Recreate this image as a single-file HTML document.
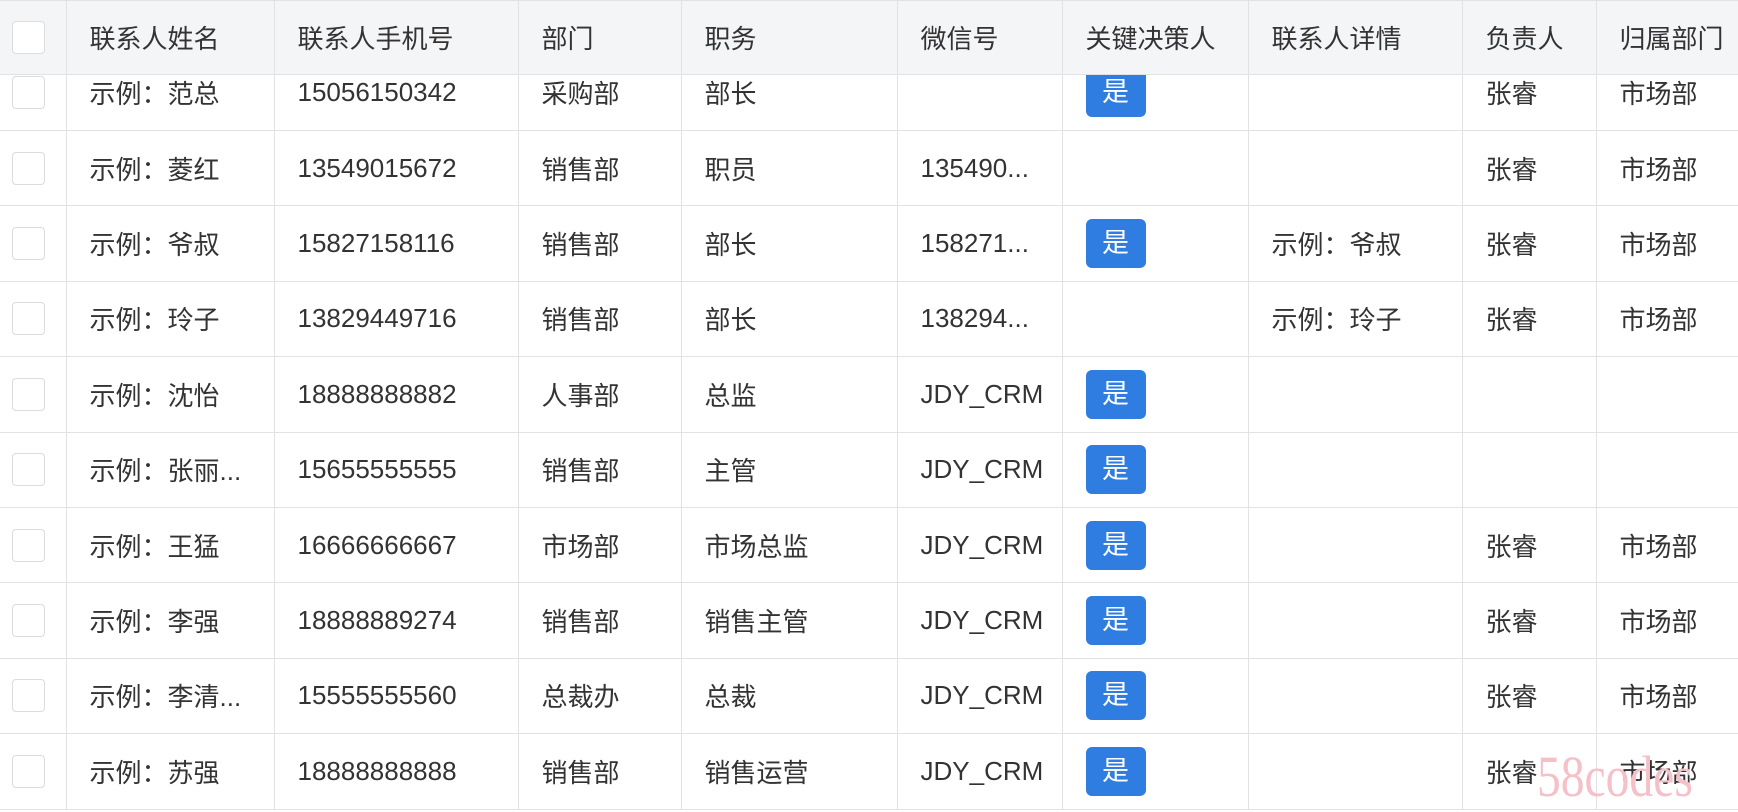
<!DOCTYPE html>
<html><head><meta charset="utf-8"><style>
*{margin:0;padding:0;box-sizing:border-box}
body{width:1738px;height:812px;overflow:hidden;background:#fff;font-family:"Liberation Sans","Noto Sans CJK SC",sans-serif;color:#333;font-size:26px}
table{border-collapse:collapse;table-layout:fixed;position:absolute;left:0;width:1738px}
td,th{border:1.5px solid #e2e2e2;padding:0 0 0 23px;white-space:nowrap;overflow:hidden;text-align:left;font-weight:normal;vertical-align:middle}
#body{top:54.6px}
#body tr{height:75.4px}
#head{top:0;z-index:2;background:#f4f5f6}
#head tr{height:74px}
td:first-child,th:first-child{padding-left:12px;border-left:none}
.cb{display:block;width:33px;height:33px;border:1.5px solid #dcdcdc;border-radius:4px;background:#fff}
.b{display:inline-block;width:60px;height:49px;background:#2f7de1;color:#fff;border-radius:6px;text-align:center;line-height:49px;font-size:27px}
.wm{position:absolute;left:1537px;top:748px;font-family:"Liberation Serif",serif;font-size:58px;color:#f5c0c8;z-index:3;transform:scaleX(0.82);transform-origin:left top;line-height:1}
</style></head><body>
<table id="head"><colgroup><col style="width:66px"><col style="width:208px"><col style="width:244px"><col style="width:163px"><col style="width:216px"><col style="width:165px"><col style="width:186px"><col style="width:214px"><col style="width:134px"><col style="width:142px"></colgroup>
<tr><th><span class="cb"></span></th><th>联系人姓名</th><th>联系人手机号</th><th>部门</th><th>职务</th><th>微信号</th><th>关键决策人</th><th>联系人详情</th><th>负责人</th><th>归属部门</th></tr></table>
<table id="body"><colgroup><col style="width:66px"><col style="width:208px"><col style="width:244px"><col style="width:163px"><col style="width:216px"><col style="width:165px"><col style="width:186px"><col style="width:214px"><col style="width:134px"><col style="width:142px"></colgroup>
<tr><td><span class="cb"></span></td><td>示例：范总</td><td>15056150342</td><td>采购部</td><td>部长</td><td></td><td><span class="b">是</span></td><td></td><td>张睿</td><td>市场部</td></tr>
<tr><td><span class="cb"></span></td><td>示例：菱红</td><td>13549015672</td><td>销售部</td><td>职员</td><td>135490...</td><td></td><td></td><td>张睿</td><td>市场部</td></tr>
<tr><td><span class="cb"></span></td><td>示例：爷叔</td><td>15827158116</td><td>销售部</td><td>部长</td><td>158271...</td><td><span class="b">是</span></td><td>示例：爷叔</td><td>张睿</td><td>市场部</td></tr>
<tr><td><span class="cb"></span></td><td>示例：玲子</td><td>13829449716</td><td>销售部</td><td>部长</td><td>138294...</td><td></td><td>示例：玲子</td><td>张睿</td><td>市场部</td></tr>
<tr><td><span class="cb"></span></td><td>示例：沈怡</td><td>18888888882</td><td>人事部</td><td>总监</td><td>JDY_CRM</td><td><span class="b">是</span></td><td></td><td></td><td></td></tr>
<tr><td><span class="cb"></span></td><td>示例：张丽...</td><td>15655555555</td><td>销售部</td><td>主管</td><td>JDY_CRM</td><td><span class="b">是</span></td><td></td><td></td><td></td></tr>
<tr><td><span class="cb"></span></td><td>示例：王猛</td><td>16666666667</td><td>市场部</td><td>市场总监</td><td>JDY_CRM</td><td><span class="b">是</span></td><td></td><td>张睿</td><td>市场部</td></tr>
<tr><td><span class="cb"></span></td><td>示例：李强</td><td>18888889274</td><td>销售部</td><td>销售主管</td><td>JDY_CRM</td><td><span class="b">是</span></td><td></td><td>张睿</td><td>市场部</td></tr>
<tr><td><span class="cb"></span></td><td>示例：李清...</td><td>15555555560</td><td>总裁办</td><td>总裁</td><td>JDY_CRM</td><td><span class="b">是</span></td><td></td><td>张睿</td><td>市场部</td></tr>
<tr><td><span class="cb"></span></td><td>示例：苏强</td><td>18888888888</td><td>销售部</td><td>销售运营</td><td>JDY_CRM</td><td><span class="b">是</span></td><td></td><td>张睿</td><td>市场部</td></tr>
</table>
<div class="wm">58codes</div>
</body></html>
